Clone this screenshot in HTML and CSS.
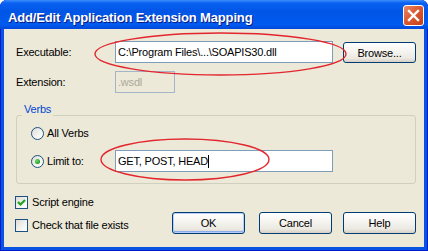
FILE: index.html
```html
<!DOCTYPE html>
<html lang="en">
<head>
    <meta charset="UTF-8">
    <title>Add/Edit Application Extension Mapping</title>
    <link rel="stylesheet" href="styles.css">
</head>
<body>

    <div class="window">
        <div class="titlebar">
            <span class="title">Add/Edit Application Extension Mapping</span>
            <span class="close">
                <svg width="19" height="19" viewBox="0 0 19 19">
                    <path d="M5 5 L14 14 M14 5 L5 14" stroke="#fff" stroke-width="2.4" stroke-linecap="square"/>
                </svg>
            </span>
        </div>

        <div class="client">
            <div class="fields">
                <span class="lbl">Executable:</span>
                <div class="edit">C:\Program Files\...\SOAPIS30.dll</div>
                <button class="btn browse">Browse...</button>

                <span class="lbl">Extension:</span>
                <div class="edit short disabled">.wsdl</div>
            </div>

            <div class="group">
                <div class="group-title">Verbs</div>
                <div class="verbs">
                    <div class="opt"><span class="radio"></span>All Verbs</div>
                    <div></div>
                    <div class="opt"><span class="radio on"></span>Limit to:</div>
                    <div class="edit">GET, POST, HEAD<span class="caret"></span></div>
                </div>
            </div>

            <div class="footer">
                <div class="checks">
                    <div class="opt">
                        <span class="check">
                            <svg width="11" height="11" viewBox="0 0 11 11">
                                <path d="M2 5 L4.5 7.5 L9 3" fill="none" stroke="#21a121" stroke-width="2.2"/>
                            </svg>
                        </span>Script engine
                    </div>
                    <div class="opt"><span class="check"></span>Check that file exists</div>
                </div>
                <div class="buttons">
                    <button class="btn default ok">OK</button>
                    <button class="btn cancel">Cancel</button>
                    <button class="btn">Help</button>
                </div>
            </div>
        </div>

        <!-- red annotation marks drawn over the dialog -->
        <svg class="marks" width="428" height="251" viewBox="0 0 428 251">
            <ellipse cx="220.5" cy="54" rx="125.5" ry="21" fill="none" stroke="#e3262e" stroke-width="1.4"/>
            <ellipse cx="185" cy="159.5" rx="84" ry="20.5" fill="none" stroke="#e3262e" stroke-width="1.4"/>
        </svg>
    </div>

</body>
</html>
```

FILE: styles.css
```css
body {
    margin: 0;
    background-color: #fff;
    font-family: "Liberation Sans", Arial, sans-serif;
    font-size: 11px;
    letter-spacing: -0.2px;
    color: #000;
}
.window {
    position: relative;
    width: 428px;
    height: 251px;
    display: flex;
    flex-direction: column;
    background-color: #0753e2;
    border-radius: 7px 7px 0 0;
    box-shadow: inset 1px 0 0 #0019cf, inset -1px 0 0 #0019cf, inset 0 -1px 0 #0019cf;
}
.titlebar {
    height: 29px;
    display: flex;
    align-items: flex-start;
    padding: 0 4px 0 8px;
    border-radius: 7px 7px 0 0;
    background: linear-gradient(to bottom, #3d8ffb 0, #0a61f2 3px, #0055e5 40%, #005aef 85%, #0048d9 100%);
}
.title {
    margin-top: 10px;
    line-height: 16px;
    font-size: 13px;
    font-weight: bold;
    letter-spacing: -0.15px;
    color: #fff;
    text-shadow: 1px 1px 0 #0a1883;
}
.close {
    margin: 5px 0 0 auto;
    width: 19px;
    height: 19px;
    border: 1px solid #fff;
    border-radius: 3px;
    background: linear-gradient(135deg, #e88a68 0%, #dc5a33 45%, #c43f18 100%);
    display: flex;
}
.client {
    flex: 1;
    margin: 0 4px 4px;
    padding: 12px 8px 0 12px;
    background-color: #ece9d8;
}
.fields {
    display: grid;
    grid-template-columns: 99px 218px 73px;
    grid-auto-rows: 22px;
    row-gap: 8px;
    align-items: center;
}
.browse {
    margin-left: 10px;
}
.edit {
    box-sizing: border-box;
    height: 22px;
    border: 1px solid #7f9db9;
    background-color: #fff;
    padding-left: 2px;
    line-height: 20px;
    white-space: nowrap;
    display: flex;
    align-items: center;
}
.edit.short {
    width: 60px;
}
.edit.disabled {
    background-color: #ece9d8;
    border-color: #a5b4c6;
    color: #aca899;
}
.caret {
    width: 1px;
    height: 13px;
    background-color: #000;
}
.btn {
    box-sizing: border-box;
    width: 73px;
    height: 22px;
    padding: 0;
    border: 1px solid #003c74;
    border-radius: 3px;
    background: linear-gradient(to bottom, #fff 0%, #f6f5f1 40%, #ebe9e1 80%, #d6d0c5 100%);
    font-family: inherit;
    font-size: 11px;
    letter-spacing: -0.2px;
    color: #000;
}
.btn.browse {
    height: 21px;
    align-self: end;
}
.btn.default {
    box-shadow: inset 0 0 0 1px #b8cef6, inset 0 -1px 0 1px #89adec;
}
.group {
    margin-top: 22px;
    border: 1px solid #d0d0bf;
    border-radius: 3px;
}
.group-title {
    display: table;
    margin: -13px 0 0 5px;
    padding: 0 2px;
    line-height: 13px;
    background-color: #ece9d8;
    color: #0046d5;
}
.verbs {
    display: grid;
    grid-template-columns: 84px 218px;
    grid-auto-rows: 22px;
    row-gap: 6px;
    padding: 6px 0 11px 14px;
    align-items: center;
}
.opt {
    display: flex;
    align-items: center;
    line-height: 13px;
    white-space: nowrap;
}
.radio {
    box-sizing: border-box;
    width: 13px;
    height: 13px;
    margin-right: 3px;
    border: 1px solid #1c5180;
    border-radius: 50%;
    background: linear-gradient(135deg, #dcdcd7 0%, #f4f4f1 60%, #fff 100%);
    display: flex;
    align-items: center;
    justify-content: center;
}
.radio.on::after {
    content: "";
    width: 5px;
    height: 5px;
    border-radius: 50%;
    background: radial-gradient(circle at 35% 35%, #6fd86f 0%, #21a121 70%, #1a8a1a 100%);
}
.footer {
    display: flex;
    align-items: flex-start;
    margin-top: 12px;
}
.checks {
    display: flex;
    flex-direction: column;
    gap: 10px;
    margin-left: -1px;
}
.check {
    box-sizing: border-box;
    width: 13px;
    height: 13px;
    margin-right: 4px;
    border: 1px solid #1c5180;
    background: linear-gradient(135deg, #dcdcd7 0%, #f4f4f1 60%, #fff 100%);
    display: flex;
}
.buttons {
    display: flex;
    margin: 16px 0 0 auto;
}
.ok {
    margin-right: 14px;
}
.cancel {
    margin-right: 11px;
}
.marks {
    position: absolute;
    top: 0;
    left: 0;
    pointer-events: none;
}
```
